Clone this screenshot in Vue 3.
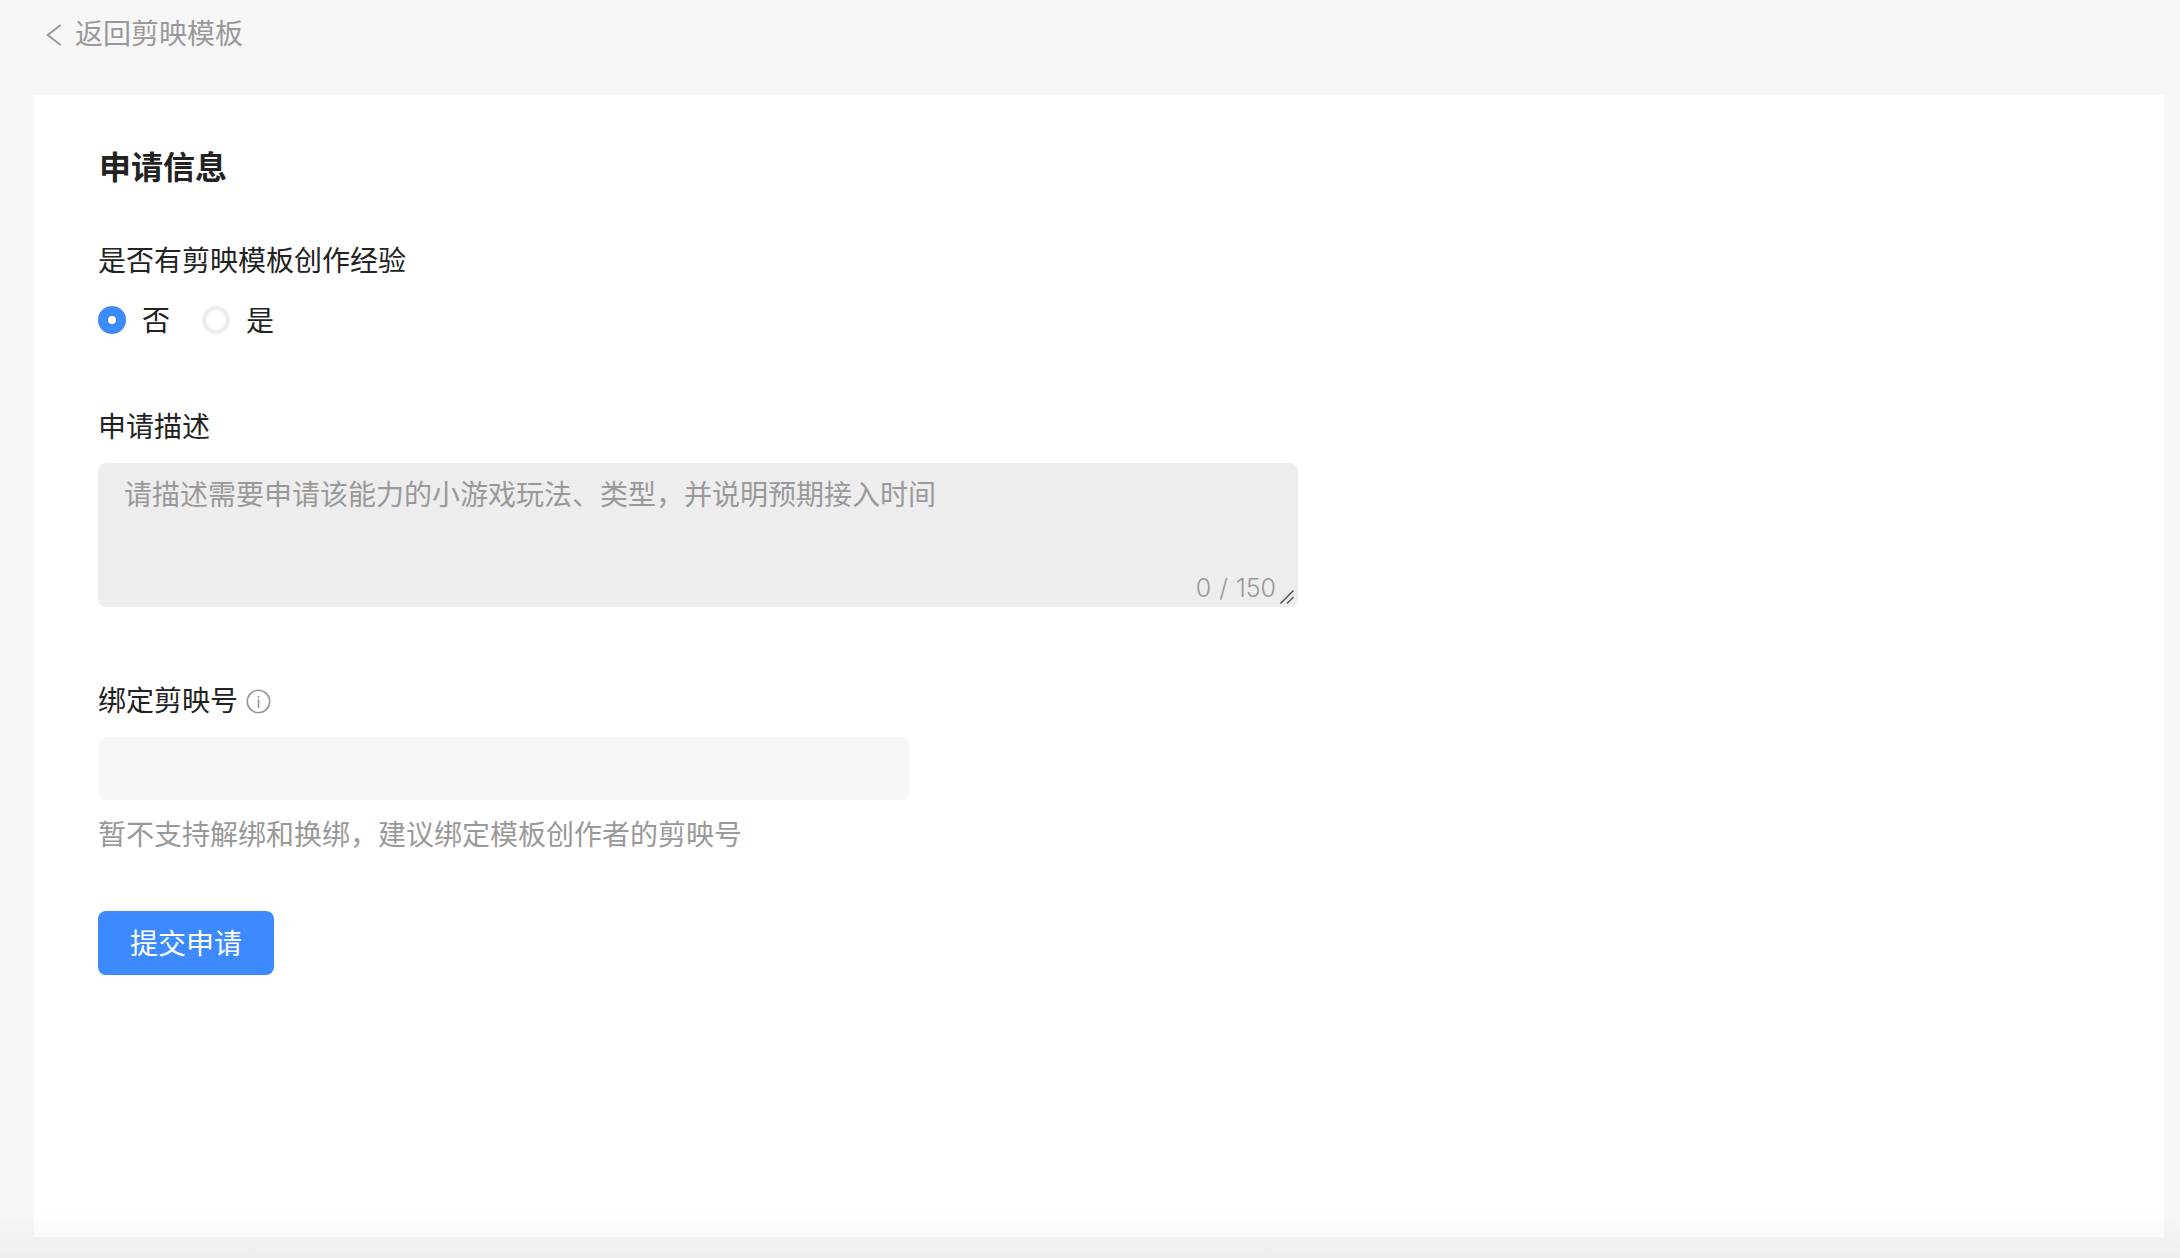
<script setup>
import { ref } from 'vue'
const experience = ref('no')
const desc = ref('')
const account = ref('')
</script>

<template>
  <div class="page">
    <header class="back">
      <svg class="chev" viewBox="0 0 16 28" width="16" height="28"><path d="M14.6 4 L1.8 14 L14.6 24" fill="none" stroke="#999" stroke-width="2"/></svg>
      <span>返回剪映模板</span>
    </header>
    <main class="card">
      <h1 class="title">申请信息</h1>

      <div class="label first">是否有剪映模板创作经验</div>
      <div class="radios">
        <label class="radio" @click="experience = 'no'">
          <span class="dot" :class="{ on: experience === 'no' }"></span>
          <span class="radio-text">否</span>
        </label>
        <label class="radio" @click="experience = 'yes'">
          <span class="dot" :class="{ on: experience === 'yes' }"></span>
          <span class="radio-text">是</span>
        </label>
      </div>

      <div class="label second">申请描述</div>
      <div class="area-wrap">
        <textarea v-model="desc" class="area" maxlength="150" placeholder="请描述需要申请该能力的小游戏玩法、类型，并说明预期接入时间"></textarea>
        <span class="count">{{ desc.length }} / 150</span>
        <svg class="grip" viewBox="0 0 16 16" width="16" height="16">
          <path d="M1.5 14.5 L14.5 1.5 M8 14.5 L14.5 8" fill="none" stroke="#555" stroke-width="1.5"/>
        </svg>
      </div>

      <div class="label third">
        <span>绑定剪映号</span>
        <svg class="info" viewBox="0 0 24 24" width="25" height="25">
          <circle cx="12" cy="12" r="10.8" fill="none" stroke="#999" stroke-width="1.6"/>
          <rect x="11.2" y="10" width="1.6" height="8" fill="#999"/>
          <rect x="11.2" y="6.6" width="1.6" height="1.8" fill="#999"/>
        </svg>
      </div>
      <input v-model="account" class="input" type="text" />
      <div class="help">暂不支持解绑和换绑，建议绑定模板创作者的剪映号</div>

      <button class="submit" type="button">提交申请</button>
    </main>
    <div class="fade"></div>
  </div>
</template>

<style>
html, body { margin: 0; padding: 0; background: #f7f7f7; }
</style>

<style scoped>
.page {
  position: relative;
  height: 1258px;
  box-sizing: border-box;
  display: flex;
  flex-direction: column;
  overflow: hidden;
  background: #f7f7f7;
  font-family: "Noto Sans CJK SC", "Noto Sans", sans-serif;
  font-size: 28px;
  color: #222;
}
.back {
  height: 95px;
  flex: none;
  box-sizing: border-box;
  display: flex;
  align-items: flex-start;
  padding: 12px 0 0 46px;
  line-height: 40px;
  color: #999;
}
.chev { margin: 9px 13px 0 0; flex: none; }
.card {
  flex: 1;
  margin: 0 16px 21px 34px;
  background: #fff;
  padding: 48px 64px 0;
  display: flex;
  flex-direction: column;
  align-items: flex-start;
}
.title {
  margin: 0;
  font-size: 32px;
  line-height: 44px;
  font-weight: 600;
  color: #222;
  padding-left: 1px;
}
.label {
  line-height: 40px;
  display: flex;
  align-items: center;
}
.label.first { margin-top: 52px; }
.label.second { margin-top: 65px; }
.label.third { margin-top: 72px; }
.radios {
  display: flex;
  margin-top: 21px;
  height: 40px;
  gap: 32px;
}
.radio {
  display: flex;
  align-items: center;
  gap: 16px;
  line-height: 40px;
  cursor: pointer;
}
.radio-text { margin-top: -3px; }
.dot {
  width: 28px;
  height: 28px;
  box-sizing: border-box;
  border-radius: 50%;
  border: 4px solid #ededed;
  background: #fff;
}
.dot.on {
  border: 10px solid #3d89ff;
}
.area-wrap {
  position: relative;
  margin-top: 18px;
  width: 1200px;
  height: 144px;
}
.area {
  display: block;
  width: 1200px;
  height: 144px;
  box-sizing: border-box;
  border: none;
  outline: none;
  border-radius: 8px;
  background: #ededed;
  padding: 10px 26px;
  font: inherit;
  line-height: 40px;
  color: #222;
  resize: none;
}
.area::placeholder { color: #999; opacity: 1; }
.count {
  position: absolute;
  right: 22px;
  bottom: 0;
  line-height: 38px;
  font-size: 25px;
  font-weight: 300;
  font-family: Inter, "Liberation Sans", sans-serif;
  word-spacing: 1px;
  color: #999;
}
.grip {
  position: absolute;
  right: 3px;
  bottom: 2px;
}
.info { margin: 4px 0 0 8px; }
.input {
  display: block;
  margin-top: 18px;
  width: 812px;
  height: 63px;
  box-sizing: border-box;
  border: none;
  outline: none;
  border-radius: 8px;
  background: #f7f7f7;
  padding: 0 27px;
  font: inherit;
}
.help {
  margin-top: 13px;
  line-height: 40px;
  color: #999;
}
.submit {
  margin-top: 58px;
  width: 176px;
  height: 64px;
  box-sizing: border-box;
  border: none;
  border-radius: 8px;
  background: #3d89ff;
  color: #fff;
  font: inherit;
  padding: 0 0 3px;
}
.fade {
  position: absolute;
  left: 0;
  right: 0;
  bottom: 0;
  height: 48px;
  background: linear-gradient(to bottom, rgba(0,0,0,0), rgba(0,0,0,.04));
  pointer-events: none;
}
</style>
